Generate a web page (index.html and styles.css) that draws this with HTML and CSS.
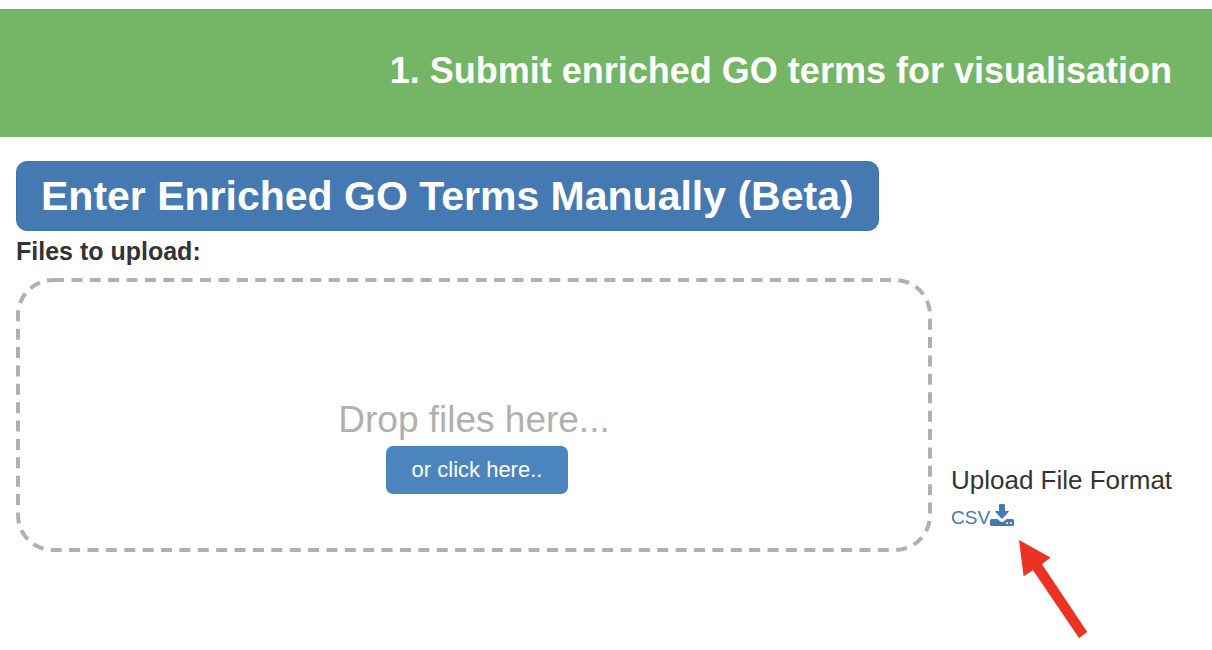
FILE: index.html
```
<!DOCTYPE html>
<html lang="en">
<head>
<meta charset="utf-8">
<title>Submit enriched GO terms</title>
<meta name="viewport" content="width=device-width, initial-scale=1">
<link rel="stylesheet" href="styles.css">
</head>
<body>
<header class="banner">
  <h1 class="banner-title">1. Submit enriched GO terms for visualisation</h1>
</header>
<main class="content">
  <button type="button" class="manual-button">Enter Enriched GO Terms Manually (Beta)</button>
  <h2 class="upload-label" id="upload-label">Files to upload:</h2>
  <div class="upload-row">
    <section class="dropzone" aria-labelledby="upload-label">
      <svg class="dropzone-outline" aria-hidden="true"><rect class="dropzone-dashes" x="2" y="2" rx="35" ry="35"/></svg>
      <p class="drop-hint">Drop files here...</p>
      <button type="button" class="browse-button">or click here..</button>
    </section>
    <aside class="format">
      <p class="format-title">Upload File Format</p>
      <a class="format-link" href="#csv">CSV<svg class="download-icon" viewBox="0 0 24 23" aria-hidden="true">
          <path d="M9 1.2Q9 0 10.200 0H13.800Q15 0 15 1.200V7H18.200Q19.600 7 18.600 8.100L12.800 14.300Q12 15 11.200 14.300L5.400 8.100Q4.400 7 5.800 7H9Z"/>
          <path fill-rule="evenodd" d="M1.500 15H7.500L10 17.300Q12 18.700 14 17.300L16.500 15H22.500Q24 15 24 16.500V20.500Q24 22 22.500 22H1.500Q0 22 0 20.500V16.500Q0 15 1.500 15ZM16.200 18.300V20.100H18V18.300ZM20 18.300V20.100H21.800V18.300Z"/>
        </svg></a>
      <svg class="pointer-arrow" viewBox="0 0 69 98" aria-hidden="true"><path d="M0 0L31.500 17.600L23 24.200L68.300 92L60 98L14 30.300L4.600 36.300Z"/></svg>
    </aside>
  </div>
</main>
</body>
</html>
```
FILE: styles.css
```
* {
  box-sizing: border-box;
}

body {
  min-height: 100vh;
  margin: 0;
  padding-top: 9px;
  background: #fff;
  color: #333;
  font-family: "Liberation Sans", Arial, sans-serif;
  font-size: 26px;
}

h1,
h2,
p {
  margin: 0;
}

button {
  border: 0;
  color: #fff;
  font-family: inherit;
  cursor: pointer;
}

.banner {
  padding: 40px 40px 44px;
  background: #74b566;
  color: #fff;
  text-align: right;
}

.banner-title {
  font-size: 36px;
  line-height: 44px;
}

.content {
  padding: 24px 0 0 16px;
}

.manual-button {
  display: block;
  padding: 10px 24px;
  border: 1px solid #3d72aa;
  border-radius: 11px;
  background: #4479b2;
  font-size: 41px;
  font-weight: bold;
  line-height: 48px;
}

.upload-label {
  padding: 2px 0 8px;
  font-size: 25px;
  line-height: 37px;
}

.upload-row {
  display: flex;
  gap: 19px;
}

.dropzone {
  position: relative;
  display: flex;
  flex: 1;
  flex-direction: column;
  align-items: center;
  min-height: 274px;
  padding: 120px 0 58px;
}

.dropzone-outline {
  position: absolute;
  inset: 0;
  width: 100%;
  height: 100%;
}

.dropzone-dashes {
  width: calc(100% - 4px);
  height: calc(100% - 4px);
  fill: none;
  stroke: #b0b0b0;
  stroke-width: 4;
  stroke-dasharray: 11 7.38;
}

.drop-hint {
  position: relative;
  color: #b0b0b0;
  font-size: 37px;
  line-height: 44px;
}

.browse-button {
  position: relative;
  margin: 4px 0 0 6px;
  padding: 10px 26px;
  border-radius: 7px;
  background: #4c85be;
  font-size: 22px;
  line-height: 28px;
}

.format {
  position: relative;
  flex: 0 0 261px;
  padding-top: 184px;
}

.format-title {
  line-height: 37px;
}

.format-link {
  display: inline-flex;
  align-items: center;
  height: 37px;
  color: #4479b2;
  font-size: 19px;
  text-decoration: none;
}

.download-icon {
  width: 24px;
  height: 23px;
  margin-bottom: 5px;
  fill: #4479b2;
}

.pointer-arrow {
  position: absolute;
  top: 262px;
  left: 68px;
  width: 69px;
  height: 98px;
  fill: #ec3323;
}
```
